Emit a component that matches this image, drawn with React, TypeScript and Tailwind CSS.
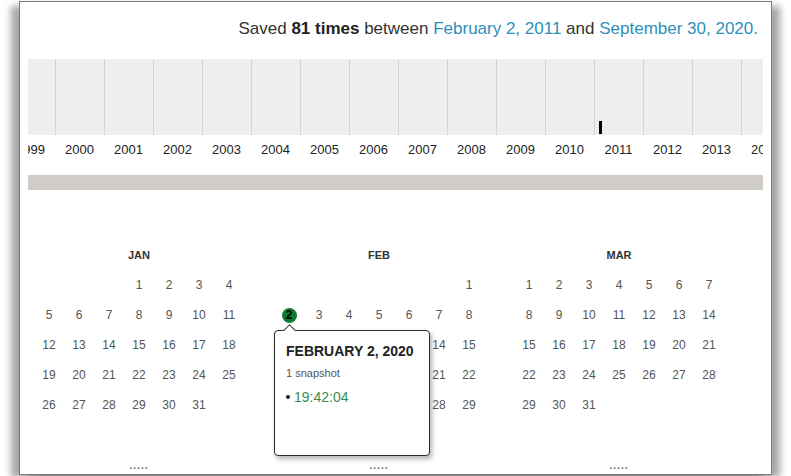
const years = Array.from({length: 16}, (_, i) => 1999 + i)

type Month = {name: string; offset: number; days: number}

const months: Month[] = [
  {name: 'JAN', offset: 3, days: 31},
  {name: 'FEB', offset: 6, days: 29},
  {name: 'MAR', offset: 0, days: 31},
]

// days that sit under the popup in the reference
const hiddenFeb = [9, 10, 11, 12, 13, 16, 17, 18, 19, 20, 23, 24, 25, 26, 27]

function Tooltip() {
  return (
    <div className="absolute left-0 top-[30px] z-10 h-[126px] w-[156px] rounded-[4px] border border-[#2b2b2b] bg-white px-[11px] pt-[11px] text-left shadow-[2px_3px_5px_rgba(0,0,0,0.3)]">
      <div className="absolute left-[10px] top-[-5px] h-[9px] w-[9px] rotate-45 border-l border-t border-[#2b2b2b] bg-white" />
      <div className="text-[14px] font-bold leading-[18px] text-[#222]">
        FEBRUARY 2, 2020
      </div>
      <div className="mt-[6px] text-[11px] leading-[14px] text-[#555]">1 snapshot</div>
      <div className="mt-[8px] flex items-center text-[14px] leading-[18px]">
        <span className="mr-[4px] h-[4px] w-[4px] rounded-full bg-[#222]" />
        <span className="text-[#3a8c4e]">19:42:04</span>
      </div>
    </div>
  )
}

function MonthGrid({month}: {month: Month}) {
  const cells: (number | null)[] = []
  for (let i = 0; i < month.offset; i++) cells.push(null)
  for (let d = 1; d <= month.days; d++) cells.push(d)
  while (cells.length < 42) cells.push(null)

  return (
    <div className="w-[210px]">
      <div className="flex h-[30px] items-center justify-center text-[11px] font-bold text-[#333]">
        {month.name}
      </div>
      <div className="grid grid-cols-7">
        {cells.map((d, i) => {
          const isFeb = month.name === 'FEB'
          const captured = isFeb && d === 2
          const hidden = isFeb && d !== null && hiddenFeb.includes(d)
          return (
            <div
              key={i}
              className="relative flex h-[30px] w-[30px] items-center justify-center text-[12px] text-[#555]"
            >
              {captured ? (
                <>
                  <span className="flex h-[15px] w-[15px] items-center justify-center rounded-full bg-[#0c7c33] text-[12px] font-bold text-black">
                    2
                  </span>
                  <Tooltip />
                </>
              ) : hidden ? null : (
                d
              )}
            </div>
          )
        })}
      </div>
      <div className="flex h-[30px] items-center justify-center text-[10px] font-bold tracking-[1px] text-[#666]">
        .....
      </div>
    </div>
  )
}

export default function App() {
  return (
    <div className="h-[476px] w-[791px] overflow-hidden bg-white font-['Liberation_Sans',Arial,sans-serif]">
      <div className="ml-[19px] mt-[1px] h-[474px] w-[753px] overflow-hidden border border-[#7a7a7a] bg-white shadow-[-9px_4px_7px_-1px_rgba(0,0,0,0.35),9px_4px_7px_-1px_rgba(0,0,0,0.35)]">
        <div className="pr-[13px] pt-[17px] text-right text-[17px] leading-[20px] text-[#333]">
          Saved <b className="text-[#222]">81 times</b> between{' '}
          <span className="text-[#2d8fbb]">February 2, 2011</span> and{' '}
          <span className="text-[#2d8fbb]">September 30, 2020.</span>
        </div>

        <div className="mx-[8px] mt-[20px] overflow-hidden">
          <div className="ml-[-22px] flex">
            {years.map((y) => (
              <div key={y} className="w-[49px] shrink-0">
                <div className="flex h-[76px] items-end border-l border-[#d4d4d4] bg-[#efeeed]">
                  {y === 2011 && <div className="mb-[1px] ml-[4px] h-[13px] w-[3px] bg-black" />}
                </div>
                <div className="flex h-[29px] items-center justify-center text-[13px] text-[#222]">
                  {y}
                </div>
              </div>
            ))}
          </div>
        </div>

        <div className="mx-[8px] mt-[11px] h-[15px] bg-[#d0cdc8]" />

        <div className="mt-[50px] flex gap-[30px] pl-[14px]">
          {months.map((m) => (
            <MonthGrid key={m.name} month={m} />
          ))}
        </div>
      </div>
    </div>
  )
}
